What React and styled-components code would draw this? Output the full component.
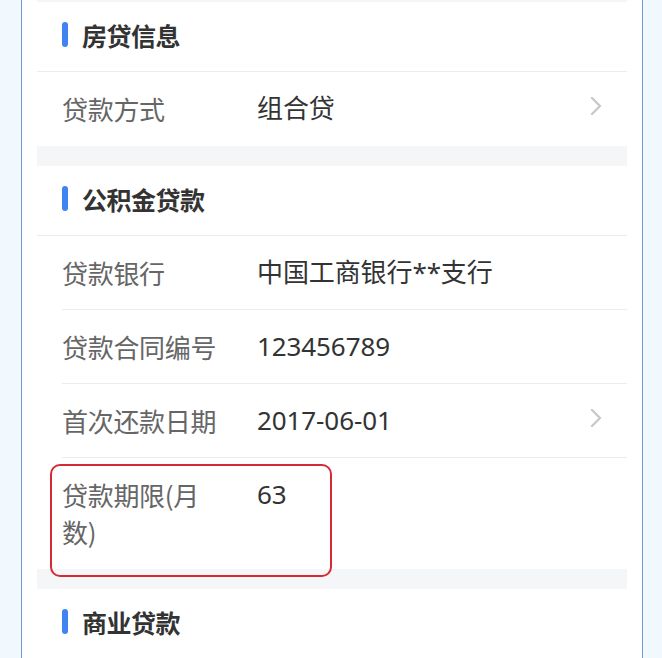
import React from 'react';
import styled, { createGlobalStyle } from 'styled-components';

const GlobalStyle = createGlobalStyle`
  html, body {
    margin: 0;
    padding: 0;
    background: #f1f9fe;
    font-family: "Noto Sans CJK SC", "Noto Sans", sans-serif;
  }
`;

const Frame = styled.div`
  box-sizing: border-box;
  width: 622px;
  min-height: 658px;
  margin-left: 21px;
  padding: 0 15px;
  background: #ffffff;
  border-left: 1px solid #6c9fd4;
  border-right: 1px solid #6c9fd4;
`;

const Column = styled.div`
  background: #f5f6f8;
  padding-top: 2px;
  display: flex;
  flex-direction: column;
  gap: 20px;
`;

const Section = styled.section`
  background: #ffffff;
`;

const Header = styled.div`
  box-sizing: border-box;
  height: 69px;
  display: flex;
  align-items: center;
  padding: 0 0 4px 25px;
  border-bottom: ${p => (p.$open ? '1px solid #ececec' : 'none')};
  font-size: 25px;
  font-weight: 700;
  color: #333333;
  letter-spacing: -0.5px;
  ${p => p.$open && 'height: 70px;'}
`;

const Bar = styled.span`
  width: 6px;
  height: 25px;
  border-radius: 3px;
  background: #3f84f2;
  margin-right: 14px;
`;

const Row = styled.div`
  position: relative;
  display: flex;
  align-items: flex-start;
  padding: 18px 25px 19px;
  line-height: 37px;
  font-size: 26px;
  &:not(:last-child)::after {
    content: '';
    position: absolute;
    left: 25px;
    right: 0;
    bottom: 0;
    height: 1px;
    background: #ececec;
  }
`;

const Label = styled.div`
  flex: 0 0 165px;
  margin-right: 30px;
  color: #666666;
  letter-spacing: -0.3px;
`;

const Value = styled.div`
  flex: 1;
  color: #333333;
  font-family: "Noto Sans", "Noto Sans CJK SC", sans-serif;
  letter-spacing: -0.1px;
`;

const Arrow = styled.svg`
  align-self: center;
  width: 12px;
  height: 20px;
  margin-top: -5px;
`;

const Highlight = styled.div`
  position: absolute;
  left: 13px;
  top: 6px;
  width: 282px;
  height: 113px;
  box-sizing: border-box;
  border: 2px solid #d52a36;
  border-radius: 10px;
  pointer-events: none;
`;

const Chevron = () => (
  <Arrow viewBox="0 0 12 20">
    <path d="M2 2 L10 10 L2 18" fill="none" stroke="#c9c9c9" strokeWidth="2.4" strokeLinecap="round" strokeLinejoin="round" />
  </Arrow>
);

const fundRows = [
  { label: '贷款银行', value: '中国工商银行**支行' },
  { label: '贷款合同编号', value: '123456789' },
  { label: '首次还款日期', value: '2017-06-01', arrow: true },
  { label: '贷款期限(月数)', value: '63', marked: true },
];

export default function App() {
  return (
    <>
      <GlobalStyle />
      <Frame>
        <Column>
          <Section>
            <Header $open>
              <Bar />
              房贷信息
            </Header>
            <Row>
              <Label>贷款方式</Label>
              <Value>组合贷</Value>
              <Chevron />
            </Row>
          </Section>

          <Section>
            <Header $open>
              <Bar />
              公积金贷款
            </Header>
            {fundRows.map(r => (
              <Row key={r.label}>
                <Label>{r.label}</Label>
                <Value>{r.value}</Value>
                {r.arrow && <Chevron />}
                {r.marked && <Highlight />}
              </Row>
            ))}
          </Section>

          <Section>
            <Header>
              <Bar />
              商业贷款
            </Header>
          </Section>
        </Column>
      </Frame>
    </>
  );
}
